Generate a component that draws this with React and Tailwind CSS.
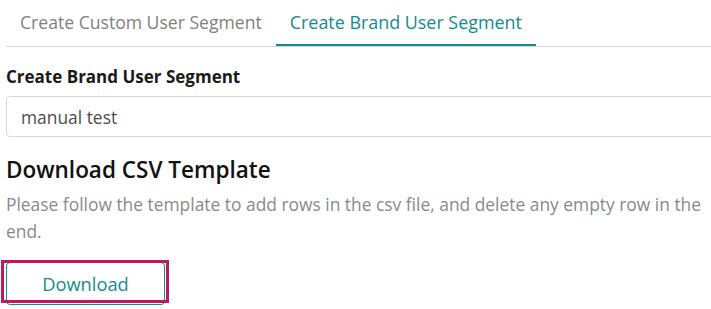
import React, { useState } from 'react';

const App = () => {
  const [tab, setTab] = useState('brand');
  const [name, setName] = useState('manual test');

  const tabClass = (active) =>
    active
      ? 'px-[14px] h-[46px] pt-[1px] text-[17.9px] text-[#138c8c] border-b-2 border-[#138c8c] whitespace-nowrap'
      : 'px-[14px] h-[46px] pt-[1px] text-[17.6px] text-[#7f7f7f] border-b-2 border-transparent whitespace-nowrap';

  return (
    <div className="min-h-screen bg-white pl-[6px] font-['Open_Sans',sans-serif] overflow-hidden">
      <div className="flex border-b border-[#d6d6d6] -mb-px">
        <button className={tabClass(tab === 'custom')} onClick={() => setTab('custom')}>
          Create Custom User Segment
        </button>
        <button className={tabClass(tab === 'brand')} onClick={() => setTab('brand')}>
          Create Brand User Segment
        </button>
      </div>

      <div className="pt-[19px]">
        <label className="block text-[17px] font-bold text-[#1a1a1a] leading-[24px] whitespace-nowrap">
          Create Brand User Segment
        </label>
        <input
          className="mt-[7px] w-[720px] h-[41px] px-[14px] border border-[#d3d9e0] rounded-[4px] text-[17.4px] text-[#4d4d4d] focus:outline-none"
          value={name}
          onChange={(e) => setName(e.target.value)}
        />
      </div>

      <h2 className="mt-[18px] text-[22.5px] font-semibold text-[#111] leading-[30px] whitespace-nowrap">
        Download CSV Template
      </h2>
      <p className="mt-[6px] text-[17.4px] text-[#8a8a8a] leading-[27px] w-[705px]">
        Please follow the template to add rows in the csv file, and delete any empty row in the end.
      </p>

      <div className="relative mt-[17px] w-[159px]">
        <button className="w-[159px] h-[43px] border border-[#138c8c] rounded-[4px] text-[18.3px] text-[#138c8c] bg-white">
          Download
        </button>
        <div className="absolute left-[-5px] top-[-2px] w-[168px] h-[43px] border-[3px] border-[#c2185b] pointer-events-none" />
      </div>
    </div>
  );
};

export default App;
